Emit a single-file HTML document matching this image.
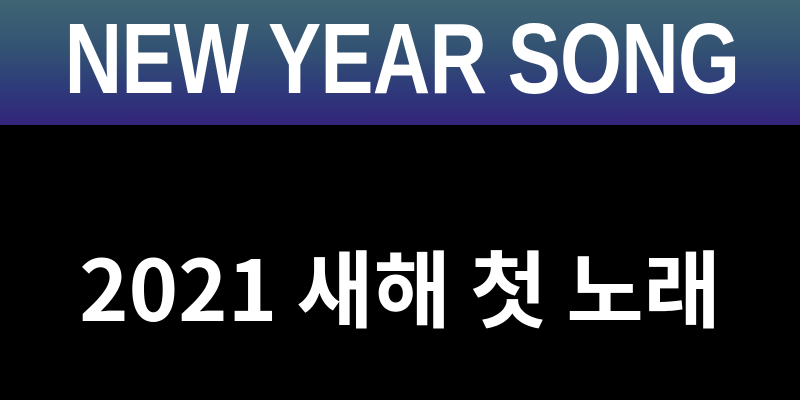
<html><head><style>
body{margin:0;width:800px;height:400px;background:#000;overflow:hidden;position:relative}
.band{position:absolute;left:0;top:0;width:800px;height:125px;background:linear-gradient(#3f6573 0%,#335273 40%,#2e3b7a 70%,#33247a 100%)}
.t1{position:absolute;left:0;top:9px;width:800px;text-align:center;color:#fff;font:bold 100px/100px "Liberation Sans",sans-serif;transform:translateX(-17px) scaleX(0.797);transform-origin:402px 0;white-space:nowrap;letter-spacing:-1px}
.t2{position:absolute;left:0;top:236px;width:800px;text-align:center;color:#fff;font:bold 84px/100px "Liberation Sans","Noto Sans CJK KR",sans-serif;white-space:nowrap;padding-left:0px}
.t2 span{font-family:"Noto Sans CJK KR",sans-serif}
</style></head><body>
<div class="band"></div>
<div class="t1">NEW YEAR SONG</div>
<div class="t2"><span>2021 새해 첫 노래</span></div>
</body></html>
